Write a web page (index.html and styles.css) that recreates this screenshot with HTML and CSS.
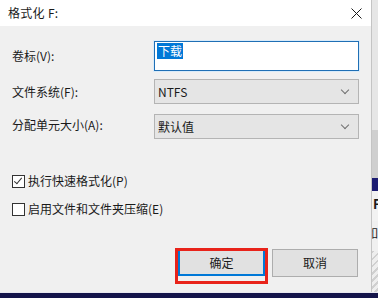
FILE: index.html
```html
<!DOCTYPE html>
<html lang="zh-cn">
    <head>
        <title>格式化 F:</title>
        <meta charset="utf-8">
        <link rel="stylesheet" href="styles.css">
    </head>

    <body>
        <div class="tela">
            <div class="topo">
                <div class="dialogo">
                    <div class="titulo">
                        <span>格式化 F:</span>
                        <svg class="fechar" width="11" height="11" viewBox="0 0 11 11">
                            <path d="M0.5 0.5 L10.5 10.5 M10.5 0.5 L0.5 10.5" stroke="#1a1a1a" stroke-width="1" fill="none"/>
                        </svg>
                    </div>

                    <div class="corpo">
                        <div class="form">
                            <label class="rotulo">卷标(V):</label>
                            <div class="campo entrada"><span class="selecao">下载</span></div>

                            <label class="rotulo">文件系统(F):</label>
                            <div class="campo combo"><span>NTFS</span><span class="seta"></span></div>

                            <label class="rotulo">分配单元大小(A):</label>
                            <div class="campo combo"><span>默认值</span><span class="seta"></span></div>
                        </div>

                        <div class="opcoes">
                            <div class="opcao"><span class="caixa marcada"></span>执行快速格式化(P)</div>
                            <div class="opcao"><span class="caixa"></span>启用文件和文件夹压缩(E)</div>
                        </div>

                        <div class="botoes">
                            <button class="botao padrao">确定</button>
                            <button class="botao">取消</button>
                        </div>
                    </div>
                </div>

                <div class="fundo">
                    <div class="f1"></div>
                    <div class="f2"></div>
                    <div class="f3"></div>
                    <div class="f4">F</div>
                    <div class="f5"><span>如</span></div>
                    <div class="f6"></div>
                </div>
            </div>
            <div class="barra"></div>
        </div>
    </body>
</html>
```

FILE: styles.css
```css
*, *::before, *::after{
    box-sizing: border-box;
}

body{
    margin: 0;
    padding: 0;
    font-family: "Noto Sans CJK SC", "Noto Sans", sans-serif;
    font-size: 12px;
    color: #1a1a1a;
    background: #f0f0f0;
}

.tela{
    width: 378px;
    height: 298px;
    display: flex;
    flex-direction: column;
    overflow: hidden;
}

.topo{
    display: flex;
    height: 292px;
}

.dialogo{
    width: 372px;
    flex: none;
    background: #f0f0f0;
    border-right: 1px solid #c4c4c4;
    display: flex;
    flex-direction: column;
}

.titulo{
    height: 26px;
    background: #ffffff;
    display: flex;
    align-items: center;
    justify-content: space-between;
    padding: 0 9px 0 8px;
    line-height: 16px;
    letter-spacing: 0.3px;
}

.fechar{
    display: block;
}

.corpo{
    flex: 1;
    padding: 15px 0 0 12px;
    display: flex;
    flex-direction: column;
}

.form{
    display: grid;
    grid-template-columns: 142px 205px;
    grid-template-rows: 30px 25px 25px;
    row-gap: 8px;
    align-items: center;
}

.form .combo:last-child{
    margin-top: 4px;
}

.rotulo{
    line-height: 16px;
}

.campo{
    height: 100%;
    display: flex;
    align-items: center;
    line-height: 16px;
}

.entrada{
    background: #ffffff;
    border: 1px solid #1f6fb5;
    box-shadow: 0 0 0 1px #d8ebfa;
    padding-left: 2px;
    height: 30px;
}

.selecao{
    background: #0078d7;
    color: #ffffff;
    padding: 0 1px;
    margin-top: -10px;
}

.combo{
    background: #e5e5e5;
    border: 1px solid #b4b4b4;
    padding: 0 0 0 3px;
    justify-content: space-between;
}

.seta{
    width: 6px;
    height: 6px;
    border-right: 1px solid #707070;
    border-bottom: 1px solid #707070;
    transform: rotate(45deg);
    margin: -4px 10px 0 0;
}

.opcoes{
    margin-top: 36px;
    display: flex;
    flex-direction: column;
    gap: 12px;
}

.opcao{
    display: flex;
    align-items: center;
    gap: 3px;
    line-height: 16px;
}

.caixa{
    width: 13px;
    height: 13px;
    border: 1px solid #333333;
    background: #ffffff;
    position: relative;
}

.marcada::after{
    content: "";
    position: absolute;
    left: 3px;
    top: 0px;
    width: 4px;
    height: 8px;
    border-right: 1px solid #333333;
    border-bottom: 1px solid #333333;
    transform: rotate(40deg);
}

.botoes{
    margin-top: 32px;
    display: flex;
    justify-content: flex-end;
    gap: 7px;
    padding-right: 13px;
}

.botao{
    font-family: inherit;
    font-size: 12px;
    color: #1a1a1a;
    width: 86px;
    height: 28px;
    background: #e1e1e1;
    border: 1px solid #adadad;
    padding: 0;
    line-height: 16px;
}

.padrao{
    width: 87px;
    height: 27px;
    border: 2px solid #0078d7;
    position: relative;
}

.padrao::after{
    content: "";
    position: absolute;
    left: -5px;
    right: -5px;
    top: -3px;
    bottom: -10px;
    border: 3px solid #e8231a;
}

.fundo{
    flex: 1;
    min-width: 0;
    overflow: hidden;
    display: flex;
    flex-direction: column;
    background: #dcdcdc;
}

.f1{
    height: 130px;
    background: #e6e6e6;
}

.f2{
    height: 48px;
    background: #cfcfcf;
}

.f3{
    height: 13px;
    background: #1c1c72;
}

.f4{
    height: 30px;
    background: #f2f2f2;
    font-weight: bold;
    font-size: 13px;
    line-height: 26px;
    padding-left: 1px;
}

.f5{
    height: 30px;
    background: #f0f0f0;
    line-height: 24px;
    display: flex;
    justify-content: flex-end;
}

.f6{
    flex: 1;
    background: repeating-linear-gradient(135deg, #d0d0d0 0 2px, #eeeeee 2px 5px);
}

.barra{
    flex: 1;
    background: #14144a;
    border-top: 1px solid #e8e8f0;
}
```
